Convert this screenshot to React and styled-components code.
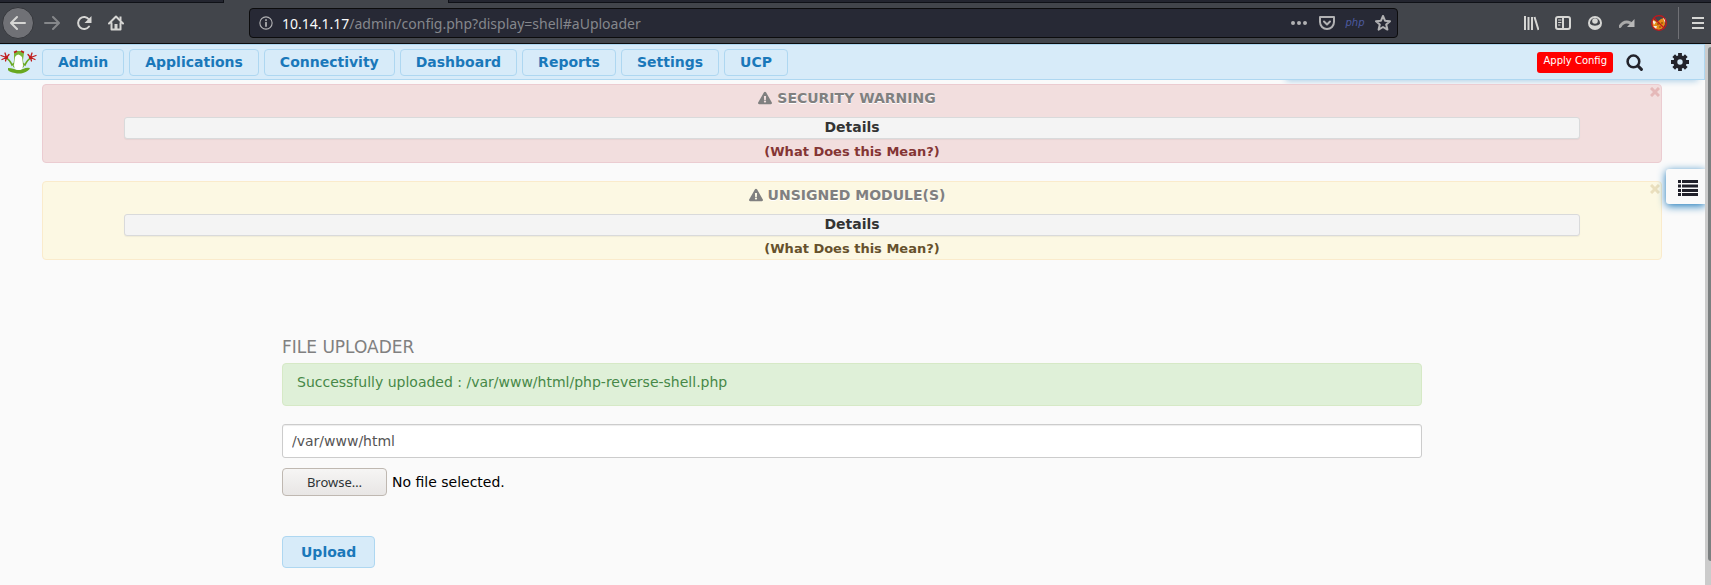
import React, { useState } from "react";
import styled, { createGlobalStyle, css } from "styled-components";
import { FaExclamationTriangle } from "react-icons/fa";

const blue = "#1a78ba";
const paleBlue = "#d7ebf9";
const lineBlue = "#aed7f1";

const GlobalStyle = createGlobalStyle`
  * { box-sizing: border-box; }
  html, body, #root { height: 100%; }
  body {
    margin: 0;
    overflow: hidden;
    background: #fafafa;
    color: #333;
    font: 14px/20px "DejaVu Sans", sans-serif;
  }
  h1, h2, p { margin: 0; }
  button, input { font: inherit; }
  svg { display: block; flex: none; }
`;

const Window = styled.div`
  display: flex;
  flex-direction: column;
  height: 100%;
`;

const TabStrip = styled.div`
  display: flex;
  height: 3px;
  background: #42454b;
`;

const IdleTab = styled.div`
  ${(p) => (p.$grow ? "flex: 1; border-left: 1px solid #0f1117;" : "width: 224px; border-right: 1px solid #0f1117;")}
  background: #23252f;
  border-bottom: 1px solid #0f1117;
`;

const ActiveTab = styled.div`
  width: 224px;
`;

const BrowserBar = styled.header`
  display: flex;
  align-items: center;
  height: 41px;
  padding: 0 0 1px 2px;
  background: #42454b;
  border-bottom: 1px solid #0c0c0d;
  color: #d6d6d4;
`;

const BrowserButton = styled.button`
  display: flex;
  align-items: center;
  justify-content: center;
  width: 32px;
  height: 32px;
  padding: 0;
  border: 0;
  background: none;
  color: inherit;
  ${(p) => p.$dim && css`color: #85878a;`}
  ${(p) =>
    p.$round &&
    css`
      margin-right: 2px;
      border-radius: 50%;
      background: #707176;
      border: 1px solid #35373c;
    `}
`;

const BrowserNav = styled.nav`
  display: flex;
  width: 247px;
`;

const AddressField = styled.form`
  display: flex;
  flex: 1;
  align-items: center;
  height: 30px;
  padding: 0 6px 0 9px;
  gap: 9px;
  border: 1px solid #0c0c0d;
  border-radius: 4px;
  background: #272935;
  color: #b1b1b3;
`;

const Address = styled.div`
  flex: 1;
  padding-top: 2px;
  font: 14px/20px "Noto Sans", sans-serif;
  color: #85878c;
  white-space: nowrap;
`;

const Host = styled.span`
  color: #f9f9fa;
`;

const PhpTag = styled.span`
  display: flex;
  justify-content: center;
  width: 16px;
  color: #4d5ba0;
  font: italic 10px/14px "DejaVu Sans", sans-serif;
`;

const AddressActions = styled.div`
  display: flex;
  align-items: center;
  gap: 12px;
`;

const BrowserTools = styled.div`
  display: flex;
  margin-left: 117px;
`;

const MenuSlot = styled.div`
  display: flex;
  justify-content: center;
  width: 33px;
  margin-left: 3px;
  padding-left: 6px;
  border-left: 1px solid #707176;
`;

const Viewport = styled.div`
  display: flex;
  flex: 1;
  min-height: 0;
`;

const Page = styled.div`
  position: relative;
  flex: 1;
  min-width: 0;
`;

const ScrollTrack = styled.div`
  display: flex;
  width: 6px;
  padding-top: 3px;
  padding-left: 3px;
  background: #cbcbcb;
`;

const ScrollThumb = styled.div`
  flex: 1;
  height: 95.5%;
  border-radius: 3px 0 0 3px;
  background: #7b7f80;
`;

const TopBar = styled.header`
  position: relative;
  display: flex;
  align-items: center;
  height: 36px;
  padding-right: 15px;
  background: ${paleBlue};
  border: 1px solid ${lineBlue};
  border-left: 0;
`;

const BarShadow = styled.div`
  position: absolute;
  z-index: -1;
  right: 6px;
  bottom: 0;
  width: 412px;
  height: 20px;
  box-shadow: 0 2px 6px #a9cde6;
`;

const Logo = styled.a`
  width: 37px;
  margin-right: 5px;
`;

const Menu = styled.nav`
  display: flex;
  flex: 1;
  gap: 5px;
`;

const blueButton = css`
  border: 1px solid ${lineBlue};
  border-radius: 4px;
  background: ${paleBlue};
  color: ${blue};
  font-weight: bold;
`;

const MenuButton = styled.button`
  ${blueButton}
  height: 27px;
  padding: 0 15px;
  line-height: 20px;
`;

const ApplyButton = styled.button`
  height: 21px;
  margin-right: 13px;
  padding: 0 6px 2px 7px;
  border: 0;
  border-radius: 3px;
  background: #f00;
  color: #fff;
  font-size: 10px;
  line-height: 16px;
`;

const IconButton = styled.button`
  display: flex;
  padding: 0;
  margin-right: ${(p) => p.$gap || 0}px;
  border: 0;
  background: none;
  color: #23232b;
`;

const Main = styled.main`
  padding: 4px 43px 0 42px;
`;

const tones = {
  danger: { bg: "#f2dede", line: "#ebccd1", text: "#843534", close: "#e5b9b9" },
  warning: { bg: "#fcf8e3", line: "#faebcc", text: "#66512c", close: "#eadfbd" },
};

const Notice = styled.section`
  position: relative;
  display: flex;
  flex-direction: column;
  height: 79px;
  margin-bottom: 18px;
  padding: 3px 81px 0;
  border: 1px solid ${(p) => tones[p.$tone].line};
  border-radius: 4px;
  background: ${(p) => tones[p.$tone].bg};
  text-align: center;
`;

const NoticeTitle = styled.h2`
  display: flex;
  align-items: center;
  justify-content: center;
  gap: 5px;
  height: 20px;
  margin: 0 10px 9px 0;
  color: #808080;
  font-size: 14px;
  line-height: 20px;
  text-transform: uppercase;
  text-shadow: 0 1px 0 #fff;
`;

const Details = styled.button`
  height: 22px;
  padding: 0 0 2px;
  border: 1px solid #d9dadb;
  border-radius: 3px;
  background: #f4f4f4;
  box-shadow: 0 1px 1px #0000000d;
  color: #333;
  font-weight: bold;
  line-height: 18px;
`;

const Meaning = styled.a`
  margin-top: 3px;
  color: ${(p) => tones[p.$tone].text};
  font-size: 13px;
  font-weight: bold;
  line-height: 20px;
  text-decoration: none;
`;

const Dismiss = styled.button`
  position: absolute;
  top: 2px;
  right: 1px;
  padding: 0;
  border: 0;
  background: none;
  color: ${(p) => tones[p.$tone].close};
`;

const SideTab = styled.button`
  position: absolute;
  top: 125px;
  right: 0;
  display: flex;
  align-items: center;
  width: 39px;
  height: 35px;
  padding: 3px 0 0 12px;
  border: 0;
  border-radius: 3px 0 0 3px;
  background: #fafafa;
  box-shadow: 0 2px 9px #1a78ba;
  clip-path: inset(-14px 0 -14px -14px);
  color: #20202a;
`;

const Uploader = styled.form`
  display: flex;
  flex-direction: column;
  align-items: stretch;
  padding: 59px 240px 0;
`;

const UploaderTitle = styled.h1`
  margin-bottom: 6px;
  color: #808080;
  font-size: 17px;
  font-weight: normal;
  line-height: 20px;
  text-transform: uppercase;
`;

const Success = styled.p`
  height: 43px;
  margin-bottom: 18px;
  padding: 8px 14px;
  border: 1px solid #d6e9c6;
  border-radius: 4px;
  background: #dff0d8;
  color: #468847;
`;

const PathInput = styled.input`
  width: 100%;
  height: 34px;
  margin-bottom: 10px;
  padding: 0 9px;
  border: 1px solid #ccc;
  border-radius: 3px;
  background: #fff;
  box-shadow: inset 0 1px 1px #00000013;
  color: #555;
`;

const FileRow = styled.div`
  display: flex;
  align-items: center;
  gap: 5px;
  margin-bottom: 40px;
  color: #000;
`;

const BrowseButton = styled.button`
  width: 105px;
  height: 28px;
  padding: 0;
  border: 1px solid #bfb8b1;
  border-radius: 4px;
  background: linear-gradient(#f6f5f4, #e8e6e5);
  color: #2e3436;
  font: 13px/20px "Noto Sans", sans-serif;
`;

const UploadButton = styled.button`
  ${blueButton}
  align-self: flex-start;
  height: 32px;
  padding: 0 18px;
`;

const Line = ({ size = 16, w = 2, children }) => (
  <svg width={size} height={size} viewBox="0 0 16 16" fill="none" stroke="currentColor" strokeWidth={w} strokeLinecap="round" strokeLinejoin="round" aria-hidden="true">
    {children}
  </svg>
);

const Frog = () => (
  <svg width="37" height="24" viewBox="0 0 37 24" aria-hidden="true">
    <path d="M8 18q3 0 6 1 4 2 9 0 4-2 7-1-1 3-7 5-4 1-8 0-6-1-7-3z" fill="#68a81f" />
    <path d="M6 8q4 2 6 7l3-2M31 8q-4 2-6 7l-3-2" stroke="#68a81f" strokeWidth="1.600" fill="none" />
    <path d="M14 3q0-2 3-2h4q3 0 3 2l-1 7 1 7q-5 3-11 0l1-7z" fill="#7ab53a" />
    <path d="M15 7q3-5 7 0l1 8q0 5-4 5-5 0-5-5z" fill="#fff" />
    <path d="M14 2.500l3-1.500M24 2.500l-3-1.500" stroke="#c01c1c" strokeWidth="1.800" />
    <circle cx="6.500" cy="7.500" r="1.600" fill="#c01c1c" />
    <circle cx="30.500" cy="7.500" r="1.600" fill="#c01c1c" />
    <path d="M1 5.500l5.500 2L5 3M6.500 7.500L9 4.500M6.500 7.500L2 9.500M6.500 7.500L5.500 11M36 5.500l-5.500 2L32 3M30.500 7.500L28 4.500M30.500 7.500L35 9.500M30.500 7.500l1 3.500" stroke="#c01c1c" strokeWidth="1.300" strokeLinecap="round" fill="none" />
  </svg>
);

const Fox = () => (
  <svg width="16" height="16" viewBox="0 0 16 16" aria-hidden="true">
    <path d="M2 4l4 3 4-3 3-1 1 6-2 4-4 2-5-1-2-4z" fill="#e58a16" />
    <path d="M1 5l4 2-2 3zM12 3l3 1-1 4zM2 11l4 0-1 3z" fill="#f5eadf" />
    <path d="M6 9h2M10 8h2M8 12h2" stroke="#7a3d08" />
    <circle cx="8" cy="8" r="7.300" fill="none" stroke="#c4161c" strokeWidth="1.300" />
    <path d="M3 3l10 10" stroke="#c4161c" strokeWidth="1.300" />
  </svg>
);

const SearchIcon = () => (
  <Line size={17} w={2.4}><circle cx="7" cy="7" r="5.500" /><path d="M11.200 11.200l3.300 3.300" strokeWidth="2.800" /></Line>
);

const GearIcon = () => (
  <svg width="18" height="18" viewBox="0 0 18 18" fill="none" stroke="currentColor" aria-hidden="true">
    <path d="M9 0v4M9 14v4M0 9h4M14 9h4M2.700 2.700l2.800 2.800M12.500 12.500l2.800 2.800M15.300 2.700l-2.800 2.800M5.500 12.500l-2.800 2.800" strokeWidth="3.800" />
    <circle cx="9" cy="9" r="4.700" strokeWidth="4" />
  </svg>
);

const ListIcon = () => (
  <svg width="20" height="16" viewBox="0 0 20 16" stroke="currentColor" aria-hidden="true">
    <path d="M0 1.500h3M4 1.500h16M0 6h3M4 6h16M0 10.500h3M4 10.500h16M0 14.500h3M4 14.500h16" strokeWidth="3" />
  </svg>
);

const CloseIcon = () => (
  <svg width="10" height="10" viewBox="0 0 10 10" stroke="currentColor" aria-hidden="true">
    <path d="M1 1l8 8M9 1L1 9" strokeWidth="3" />
  </svg>
);

const NoticeBox = ({ tone, title }) => {
  const [open, setOpen] = useState(true);
  if (!open) return null;
  return (
    <Notice $tone={tone}>
      <NoticeTitle>
        <FaExclamationTriangle size={14} />
        {title}
      </NoticeTitle>
      <Details type="button">Details</Details>
      <Meaning $tone={tone} href="#meaning">(What Does this Mean?)</Meaning>
      <Dismiss $tone={tone} aria-label="Dismiss" onClick={() => setOpen(false)}>
        <CloseIcon />
      </Dismiss>
    </Notice>
  );
};

const menu = ["Admin", "Applications", "Connectivity", "Dashboard", "Reports", "Settings", "UCP"];

const AdminBar = () => (
  <TopBar>
    <BarShadow />
    <Logo href="#home" aria-label="Home"><Frog /></Logo>
    <Menu>
      {menu.map((item) => <MenuButton key={item}>{item}</MenuButton>)}
    </Menu>
    <ApplyButton>Apply Config</ApplyButton>
    <IconButton $gap={28} aria-label="Search"><SearchIcon /></IconButton>
    <IconButton aria-label="Settings"><GearIcon /></IconButton>
  </TopBar>
);

export default function App() {
  return (
    <Window>
      <GlobalStyle />
      <TabStrip>
        <IdleTab />
        <ActiveTab />
        <IdleTab $grow />
      </TabStrip>
      <BrowserBar>
        <BrowserNav>
          <BrowserButton $round aria-label="Back">
            <Line><path d="M15 8H1.500M7 2L1 8l6 6" /></Line>
          </BrowserButton>
          <BrowserButton $dim aria-label="Forward">
            <Line><path d="M1 8h13.500M9 2l6 6-6 6" /></Line>
          </BrowserButton>
          <BrowserButton aria-label="Reload">
            <Line><path d="M13 11.500A6 6 0 1 1 13 4.500" /><path d="M15.500 1v7H8.500z" fill="currentColor" stroke="none" /></Line>
          </BrowserButton>
          <BrowserButton aria-label="Home">
            <Line><path d="M1 8.500L8 1.500l7 7M3.500 8v6.500h9V8" /><path d="M8 9v5" strokeWidth="3" strokeLinecap="butt" /><path d="M12.500 1.500v4" strokeLinecap="butt" /></Line>
          </BrowserButton>
        </BrowserNav>
        <AddressField>
          <Line size={14} w={1.3}><circle cx="8" cy="8" r="7" /><path d="M8 7.500v4M8 4.500v.3" strokeWidth="2" /></Line>
          <Address><Host>10.14.1.17</Host>/admin/config.php?display=shell#aUploader</Address>
          <AddressActions>
            <Line><path d="M2 8h.01M8 8h.01M14 8h.01" strokeWidth="4" /></Line>
            <Line><path d="M1 2h14v5a7 7 0 0 1-14 0zM5 6.500l3 3 3-3" /></Line>
            <PhpTag>php</PhpTag>
            <Line><path d="M8 1l2 4.700 5 .5-3.800 3.400 1.200 5L8 12l-4.400 2.600 1.200-5L1 6.200l5-.5z" /></Line>
          </AddressActions>
        </AddressField>
        <BrowserTools>
          <BrowserButton aria-label="Library">
            <Line><path d="M2 1v14M5.500 2v13M9 2v13M11.500 2L15.500 15" strokeLinecap="butt" /></Line>
          </BrowserButton>
          <BrowserButton aria-label="Sidebar">
            <Line><rect x="1" y="2" width="14" height="12" rx="2" /><path d="M8 2v12" /><path d="M3.500 5H6M3.500 7.500H6M3.500 10H5" strokeWidth="1" /></Line>
          </BrowserButton>
          <BrowserButton aria-label="Account">
            <Line><circle cx="8" cy="8" r="6" /><circle cx="8" cy="6" r="2.800" fill="currentColor" stroke="none" /><path d="M3 9q2 1.800 5 1.800T13 9v3l-5 2-5-2z" fill="currentColor" stroke="none" /></Line>
          </BrowserButton>
          <BrowserButton aria-label="Proxy">
            <Line><path d="M1 11.500Q5 5 11.500 8" stroke="#a9a9a9" strokeWidth="3" /><path d="M15.500 4v8H8z" fill="#b8b8b8" stroke="none" /></Line>
          </BrowserButton>
          <BrowserButton aria-label="FoxyProxy"><Fox /></BrowserButton>
        </BrowserTools>
        <MenuSlot>
          <BrowserButton aria-label="Open menu">
            <Line><path d="M2 3h12M2 8h12M2 13h12" strokeLinecap="butt" /></Line>
          </BrowserButton>
        </MenuSlot>
      </BrowserBar>
      <Viewport>
        <Page>
          <AdminBar />
          <Main>
            <NoticeBox tone="danger" title="Security Warning" />
            <NoticeBox tone="warning" title="Unsigned Module(s)" />
            <Uploader onSubmit={(e) => e.preventDefault()}>
              <UploaderTitle>File Uploader</UploaderTitle>
              <Success role="status">Successfully uploaded : /var/www/html/php-reverse-shell.php</Success>
              <PathInput aria-label="Upload directory" defaultValue="/var/www/html" />
              <FileRow>
                <BrowseButton type="button">Browse…</BrowseButton>
                <span>No file selected.</span>
              </FileRow>
              <UploadButton>Upload</UploadButton>
            </Uploader>
          </Main>
          <SideTab aria-label="Show list"><ListIcon /></SideTab>
        </Page>
        <ScrollTrack><ScrollThumb /></ScrollTrack>
      </Viewport>
    </Window>
  );
}
